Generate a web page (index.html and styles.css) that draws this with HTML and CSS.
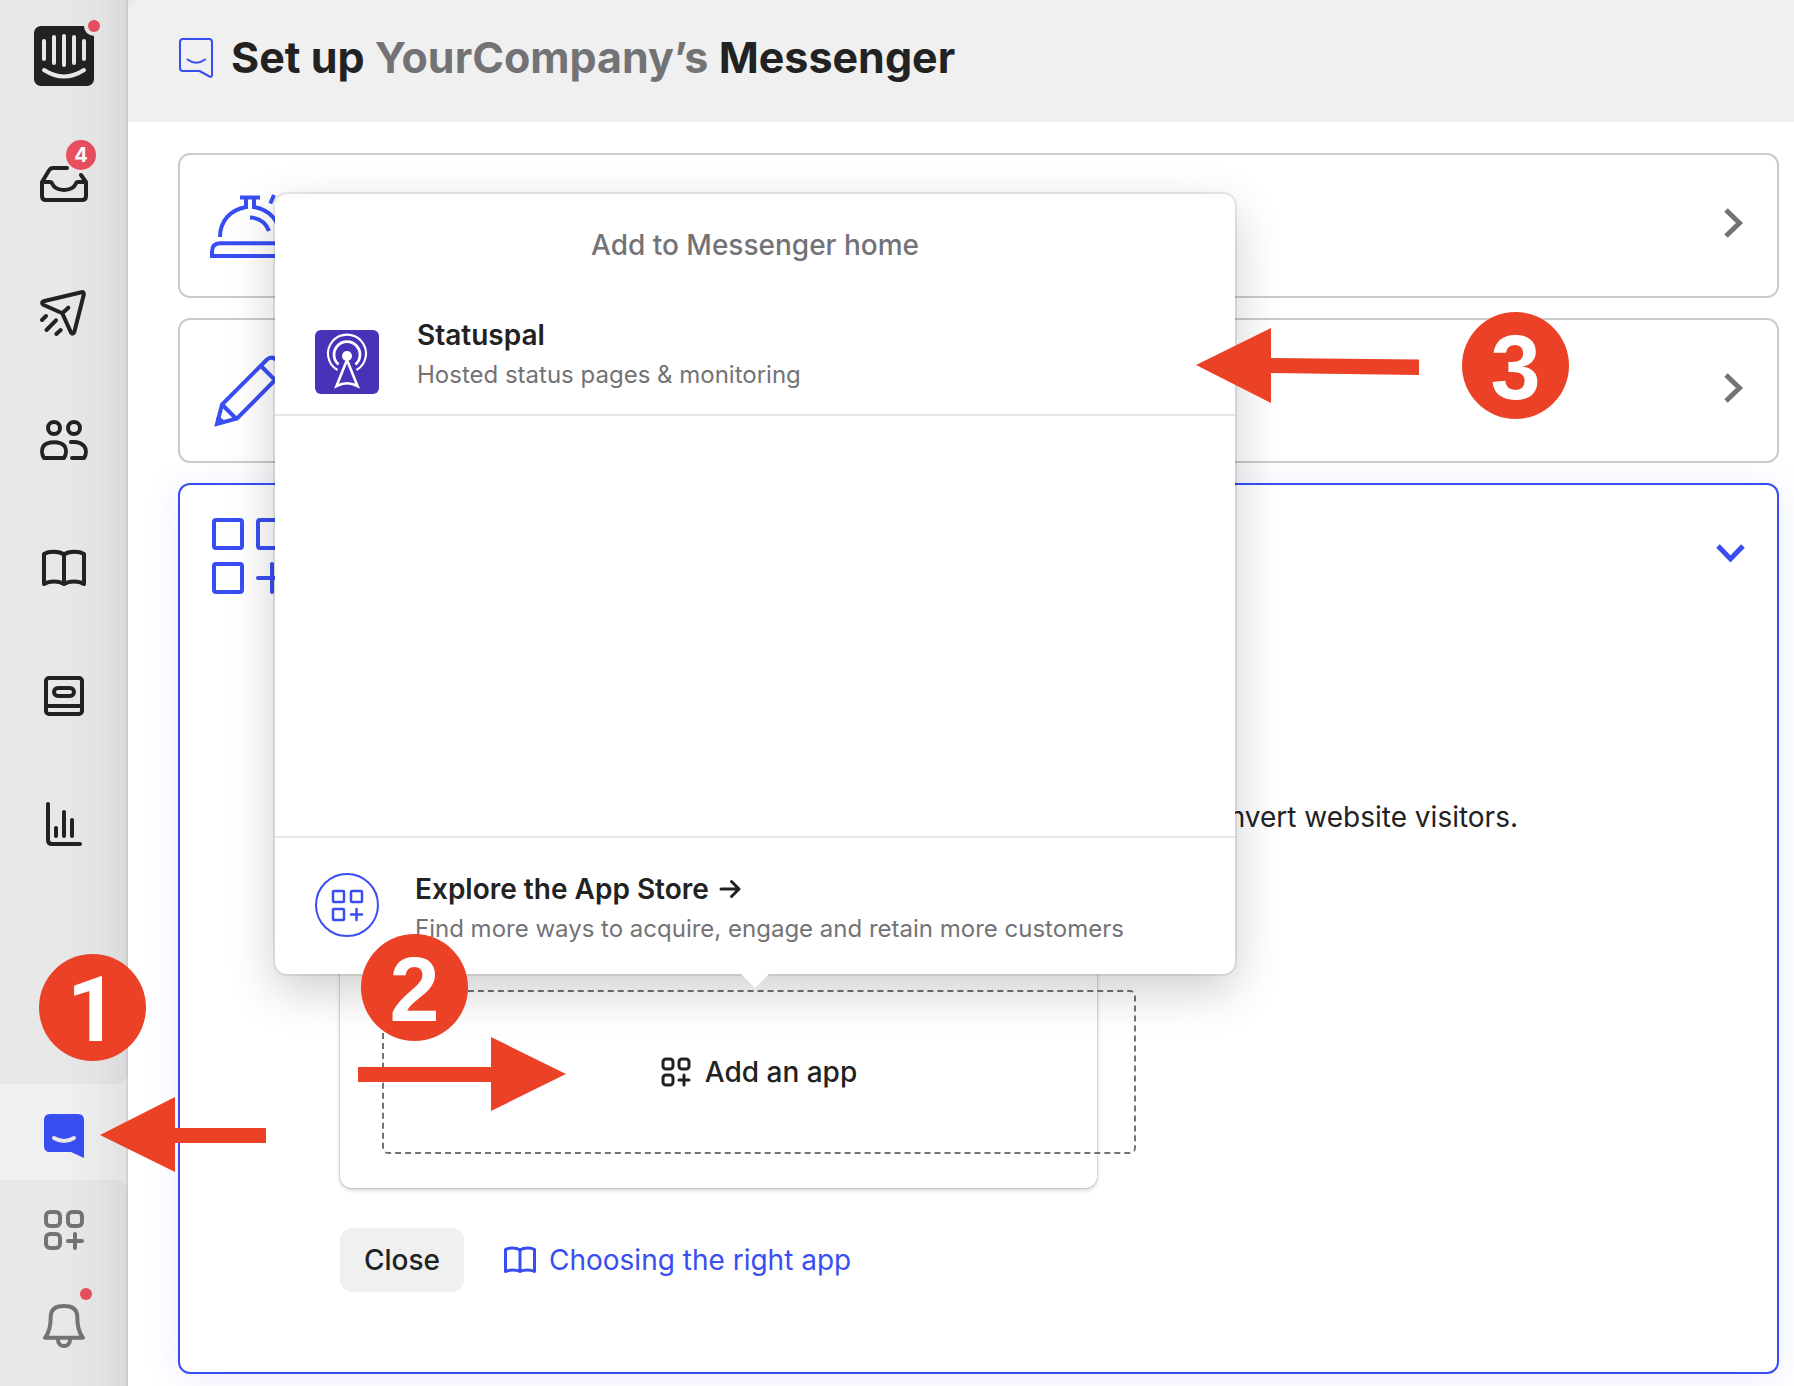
FILE: index.html
```html
<!DOCTYPE html>
<html lang="en">
<head>
<meta charset="utf-8">
<meta name="viewport" content="width=device-width, initial-scale=1">
<title>Set up Messenger</title>
<link rel="stylesheet" href="styles.css">
</head>
<body>
<div class="app">
  <nav class="sidebar" aria-label="Main">
    <div class="nav-group nav-group-top">
      <a class="nav-logo" href="#" aria-label="Home">
        <svg width="60" height="60" viewBox="0 0 60 60">
          <rect width="60" height="60" rx="7" fill="#222"/>
          <g fill="none" stroke="#e8e8e8" stroke-width="4" stroke-linecap="round">
            <path d="M10 15V33M20 11V37M30 10V39M40 11V37M50 15V33M10 44Q30 57 50 44"/>
          </g>
          <circle cx="60" cy="0" r="10" fill="#e8e8e8"/>
          <circle cx="60" cy="0" r="6" fill="#e94f5f"/>
        </svg>
      </a>
      <a class="nav-item" href="#" aria-label="Inbox">
        <svg class="icon" viewBox="0 0 48 48"><path d="M2 22L9 10.500Q10.500 8 13 8H27M41 15L46 22M2 22V36Q2 40 6 40H42Q46 40 46 36V22H38Q36.500 22 36 23.500C32 32 16 32 12 23.500Q11.500 22 10 22H2"/></svg>
        <span class="badge">4</span>
      </a>
      <a class="nav-item" href="#" aria-label="Outbound">
        <svg class="icon" viewBox="0 0 48 48"><path d="M41.500 4.200L3.500 13.200Q.800 14.500 3.200 16.700L22.300 25.300L31 44.500Q33 47 34.300 44L43.800 6.500Q44 3.500 41.500 4.200M22.300 25.300L28.300 19.700M2 32L6 28M6.500 42L16 32.300M16.300 46L20.700 42"/></svg>
      </a>
      <a class="nav-item" href="#" aria-label="Contacts">
        <svg class="icon" viewBox="0 0 48 48"><circle cx="14" cy="12" r="6"/><circle cx="34" cy="12" r="6"/><path d="M4 42C1.500 38 1.500 33 3.500 30C7.500 25 20.500 25 24.500 30C26.500 33 26.500 38 24 42ZM31 26C37 25.500 41.500 27 44 30C46.500 33 46.500 38 44 42H32"/></svg>
      </a>
      <a class="nav-item" href="#" aria-label="Articles">
        <svg class="icon" viewBox="0 0 48 48"><path d="M24 10.500C19 7 9 7 4 10V40C9 36.500 19 36.500 24 40C29 36.500 39 36.500 44 40V10C39 7 29 7 24 10.500V40"/></svg>
      </a>
      <a class="nav-item" href="#" aria-label="Operator">
        <svg class="icon" viewBox="0 0 48 48"><rect x="6" y="6" width="36" height="36" rx="3"/><path d="M6 34H42"/><rect x="14" y="16" width="20" height="8" rx="4"/></svg>
      </a>
      <a class="nav-item" href="#" aria-label="Reports">
        <svg class="icon" viewBox="0 0 48 48"><path d="M8 4V40Q8 44 12 44H40M16 28V36M24 12V36M32 20V36"/></svg>
      </a>
    </div>
    <a class="nav-item nav-item-short nav-item-active" href="#" aria-label="Messenger">
      <svg class="icon" viewBox="0 0 48 48"><path class="solid" d="M10 6H38Q44 6 44 12V50L31 44H10Q4 44 4 38V12Q4 6 10 6Z"/><path stroke="#e8e8e8" d="M14 30Q24 36 34 30"/></svg>
    </a>
    <div class="nav-group nav-group-bottom">
      <a class="nav-item nav-item-short" href="#" aria-label="App Store">
        <svg class="icon" viewBox="0 0 48 48"><rect x="6" y="8" width="14" height="14" rx="4"/><rect x="28" y="8" width="14" height="14" rx="4"/><rect x="6" y="30" width="14" height="14" rx="4"/><path d="M28 37H42M35 30V44"/></svg>
      </a>
      <a class="nav-item nav-item-short" href="#" aria-label="Notifications">
        <svg class="icon" viewBox="0 0 48 48"><path d="M5 37.700C9 33 10.700 28 10.700 17C10.700 9 16 6 24 6S37.300 9 37.300 17C37.300 28 39 33 43 37.700ZM18 40C18 48 30 48 30 40"/><circle cx="46" cy="-6" r="6" fill="#e94f5f" stroke="none"/></svg>
      </a>
    </div>
  </nav>

  <main class="main">
    <header class="page-header">
      <svg width="34" height="40" viewBox="0 0 34 40" fill="none" stroke="#394ef2" stroke-width="2" stroke-linejoin="round" stroke-linecap="round"><path d="M4 1H30Q33 1 33 4V37Q33 39.500 30.500 38.500L20.500 33H4Q1 33 1 30V4Q1 1 4 1ZM8.500 21.500Q17.300 28 26 21.500"/></svg>
      <h1>Set up <span>YourCompany’s</span> Messenger</h1>
    </header>

    <div class="cards">
      <section class="card">
        <svg class="card-icon" viewBox="0 0 80 80"><path d="M2 70V66Q2 57.300 10 57.300H70Q78 57.300 78 66V70ZM10 51C10 35 20 24 36 21V12M70 51C70 35 60 24 44 21V12M30 11.500H50M40 31.500C49 32 56 37 59 45M64 9L60.300 17.500"/></svg>
        <button class="toggle" aria-label="Expand"><svg width="34" height="34" viewBox="0 0 34 34"><path d="M13 1L26.500 14L13 27"/></svg></button>
      </section>
      <section class="card">
        <svg class="card-icon" viewBox="0 0 80 80"><path d="M7 73L12 53.500L57 8.500Q62 4 68 10L71 13Q76 18 71 23L27 67.500ZM12 53.500L26.500 68M51 15L65 29M7 66L14 72"/></svg>
        <button class="toggle" aria-label="Expand"><svg width="34" height="34" viewBox="0 0 34 34"><path d="M13 1L26.500 14L13 27"/></svg></button>
      </section>
      <section class="card card-open">
        <div class="card-head">
          <svg class="card-icon" viewBox="0 0 80 80"><rect x="4" y="5" width="28" height="28" rx="2"/><rect x="48" y="5" width="28" height="28" rx="2"/><rect x="4" y="49" width="28" height="28" rx="2"/><path stroke-linecap="round" d="M48 63H76M62 49V77"/></svg>
          <button class="toggle toggle-open" aria-label="Collapse"><svg width="34" height="34" viewBox="0 0 34 34"><path d="M5 9L17.500 22L30 9"/></svg></button>
        </div>
        <div class="card-body">
          <p class="intro">convert website visitors.</p>
          <div class="preview">
            <button class="add-app">
              <svg width="30" height="30" viewBox="0 0 30 30" fill="none" stroke="#222" stroke-width="3" stroke-linecap="round"><rect x="2" y="2" width="10" height="10" rx="3"/><rect x="18" y="2" width="10" height="10" rx="3"/><rect x="2" y="18" width="10" height="10" rx="3"/><path d="M18 23H28M23 18V28"/></svg>
              Add an app
            </button>
            <div class="popover" role="dialog" aria-labelledby="popover-title">
              <h2 id="popover-title">Add to Messenger home</h2>
              <div class="popover-list">
                <a class="app-row" href="#">
                  <svg width="64" height="64" viewBox="0 0 64 64">
                    <rect width="64" height="64" rx="6" fill="#4733b8"/>
                    <g fill="none" stroke="#fff">
                      <path d="M22.500 40A19 19 0 1 1 41.500 40" stroke-width="2.200"/>
                      <path d="M23.500 34.500A13 13 0 1 1 40.500 34.500" stroke-width="2.800"/>
                      <path d="M32 30L21.500 56Q32 50.500 42.500 56Z" stroke-width="2.600"/>
                    </g>
                    <circle cx="32" cy="26" r="5" fill="#fff"/>
                  </svg>
                  <span class="app-text"><strong>Statuspal</strong><span>Hosted status pages &amp; monitoring</span></span>
                </a>
              </div>
              <a class="app-row app-store" href="#">
                <svg width="64" height="64" viewBox="0 0 64 64" fill="none" stroke="#394ef2" stroke-width="2"><circle cx="32" cy="32" r="31"/><g stroke-width="2.500" stroke-linecap="round"><rect x="18" y="18" width="11" height="11" rx="1"/><rect x="36" y="18" width="11" height="11" rx="1"/><rect x="18" y="36" width="11" height="11" rx="1"/><path d="M36 41.500H47M41.500 36V47"/></g></svg>
                <span class="app-text"><strong>Explore the App Store <svg width="22" height="20" viewBox="0 0 22 20" fill="none" stroke="#222" stroke-width="3" stroke-linecap="round" stroke-linejoin="round"><path d="M2 10H20M12.500 2.500L20 10L12.500 17.500"/></svg></strong><span>Find more ways to acquire, engage and retain more customers</span></span>
              </a>
            </div>
          </div>
          <div class="actions">
            <button class="close">Close</button>
            <a class="help" href="#"><svg width="34" height="28" viewBox="0 0 34 28" fill="none" stroke="#394ef2" stroke-width="3" stroke-linejoin="round" stroke-linecap="round"><path d="M17 4C13 1.500 6 1.500 2.500 3.500V25.500C6 23.500 13 23.500 17 25.500C21 23.500 28 23.500 31.500 25.500V3.500C28 1.500 21 1.500 17 4V25.500"/></svg>Choosing the right app</a>
          </div>
        </div>
      </section>
    </div>
  </main>
</div>

<svg class="arrow arrow-1" width="166" height="76" viewBox="0 0 166 76"><path d="M0 38L75 0V31H166V46H75V75Z"/></svg>
<svg class="arrow arrow-2" width="208" height="76" viewBox="0 0 208 76"><path d="M208 37L133 0V30H0V45H133V74Z"/></svg>
<svg class="arrow arrow-3" width="223" height="76" viewBox="0 0 223 76"><path d="M0 37L75 0V30L223 31.500V47L75 45V75Z"/></svg>
<span class="step step-1">1</span>
<span class="step step-2">2</span>
<span class="step step-3">3</span>
</body>
</html>
```
FILE: styles.css
```css
* { box-sizing: border-box; }

body {
  position: relative;
  margin: 0;
  background: #e8e8e8;
  color: #222;
  font: 28px/40px Inter, "Liberation Sans", sans-serif;
}

button { font: inherit; color: inherit; border: 0; background: none; padding: 0; }
a { color: inherit; text-decoration: none; }
svg { display: block; flex: none; overflow: visible; }
h1, h2, p { margin: 0; }

.app { display: flex; min-height: 100vh; }

/* Sidebar */
.sidebar {
  position: relative;
  display: flex;
  flex-direction: column;
  flex: none;
  width: 128px;
  background: #f0f0f0;
}
.sidebar::after {
  content: "";
  position: absolute;
  inset: 0;
  border-right: 2px solid rgba(0, 0, 0, .12);
  background: linear-gradient(to right, transparent 50%, rgba(0, 0, 0, .02) 75%, rgba(0, 0, 0, .06));
  pointer-events: none;
}
.nav-group { background: #e8e8e8; }
.nav-group-top { flex: 1; border-radius: 0 0 12px 0; }
.nav-group-bottom { padding-bottom: 14px; border-radius: 0 12px 0 0; color: #737376; }
.nav-logo { display: block; padding: 26px 34px 34px; }
.nav-item {
  position: relative;
  display: flex;
  align-items: center;
  justify-content: center;
  height: 128px;
}
.nav-item-short { height: 96px; }
.nav-item-active { color: #394ef2; }
.icon {
  width: 48px;
  height: 48px;
  fill: none;
  stroke: currentColor;
  stroke-width: 4;
  stroke-linecap: round;
  stroke-linejoin: round;
}
.icon .solid { fill: currentColor; stroke: none; }
.badge {
  position: absolute;
  top: 20px;
  left: 66px;
  width: 30px;
  border-radius: 15px;
  background: #e94f5f;
  color: #fff;
  font-size: 20px;
  font-weight: 700;
  line-height: 30px;
  text-align: center;
}

/* Page */
.main {
  flex: 1;
  min-width: 0;
  background: #fff;
  border-top-left-radius: 12px;
  overflow: hidden;
}
.page-header {
  display: flex;
  align-items: center;
  gap: 18px;
  height: 122px;
  padding: 0 51px 6px;
  background: #f0f0f0;
}
h1 { padding-bottom: 2px; font-size: 43px; line-height: 52px; font-weight: 700; white-space: nowrap; }
h1 span { color: #737376; }

.cards {
  display: flex;
  flex-direction: column;
  gap: 20px;
  padding: 31px 15px 12px 50px;
}
.card {
  display: flex;
  align-items: center;
  justify-content: space-between;
  min-height: 145px;
  padding: 30px;
  border: 2px solid #cbcbcb;
  border-radius: 12px;
  background: #fff;
}
.card-open {
  display: block;
  padding-bottom: 80px;
  border-color: #394ef2;
  box-shadow: 0 4px 36px rgba(57, 78, 242, .1);
}
.card-head { display: flex; align-items: flex-start; justify-content: space-between; }
.card-icon { width: 80px; height: 80px; fill: none; stroke: #394ef2; stroke-width: 4; }
.toggle svg { fill: none; stroke: #737376; stroke-width: 5; }
.toggle-open { padding-top: 22px; }
.toggle-open svg { stroke: #394ef2; }
.card-body { padding: 202px 0 0 130px; }
.intro { max-width: 1178px; text-align: right; font-size: 28px; }

.preview {
  position: relative;
  max-width: 757px;
  margin-top: 43px;
  padding: 110px 0 34px 42px;
  border-radius: 12px;
  box-shadow: 0 0 0 1px rgba(0, 0, 0, .08), 0 2px 4px rgba(0, 0, 0, .2);
}
.add-app {
  display: flex;
  align-items: center;
  justify-content: center;
  gap: 14px;
  width: 754px;
  height: 164px;
  border: 2px dashed #737376;
  border-radius: 6px;
  font-weight: 500;
}

.popover {
  position: absolute;
  left: -65px;
  bottom: 214px;
  width: 960px;
  border-radius: 12px;
  background: #fff;
  box-shadow: 0 0 0 2px rgba(0, 0, 0, .08), 0 16px 48px rgba(0, 0, 0, .2);
}
.popover::after {
  content: "";
  position: absolute;
  top: 100%;
  left: 50%;
  margin-left: -14px;
  border: 14px solid transparent;
  border-top-color: #fff;
  border-bottom: 0;
}
.popover h2 {
  padding: 31px 0 50px;
  color: #737376;
  font-size: 28px;
  font-weight: 500;
  line-height: 40px;
  text-align: center;
}
.popover-list { min-height: 523px; border-bottom: 2px solid #e6e6e6; }
.app-row {
  display: flex;
  align-items: center;
  gap: 38px;
  padding: 0 40px 19px;
  border-bottom: 2px solid #e6e6e6;
}
.app-row > svg { margin-top: 14px; }
.app-store { align-items: flex-start; padding: 31px 40px 25px; border: 0; gap: 36px; }
.app-store > svg { margin-top: 4px; }
.app-text { display: flex; flex-direction: column; color: #737376; font-size: 24px; white-space: nowrap; }
.app-text strong { display: flex; align-items: center; gap: 10px; color: #222; font-size: 28px; font-weight: 600; }

.actions { display: flex; align-items: center; gap: 39px; margin-top: 40px; }
.close { width: 124px; height: 64px; border-radius: 12px; background: #f0f0f0; font-weight: 500; }
.help { display: flex; align-items: center; gap: 12px; color: #394ef2; }

/* Walkthrough markers laid over the page */
.arrow { position: absolute; fill: #ea4127; }
.arrow-1 { left: 100px; top: 1097px; }
.arrow-2 { left: 358px; top: 1037px; }
.arrow-3 { left: 1196px; top: 328px; }
.step {
  position: absolute;
  width: 107px;
  height: 107px;
  border-radius: 54px;
  background: #ea4127;
  color: #fff;
  font: 700 90px/113px "Liberation Sans", Arial, sans-serif;
  text-align: center;
}
.step-1 { left: 39px; top: 954px; font-family: Roboto, sans-serif; }
.step-2 { left: 361px; top: 934px; }
.step-3 { left: 1462px; top: 312px; }
```
